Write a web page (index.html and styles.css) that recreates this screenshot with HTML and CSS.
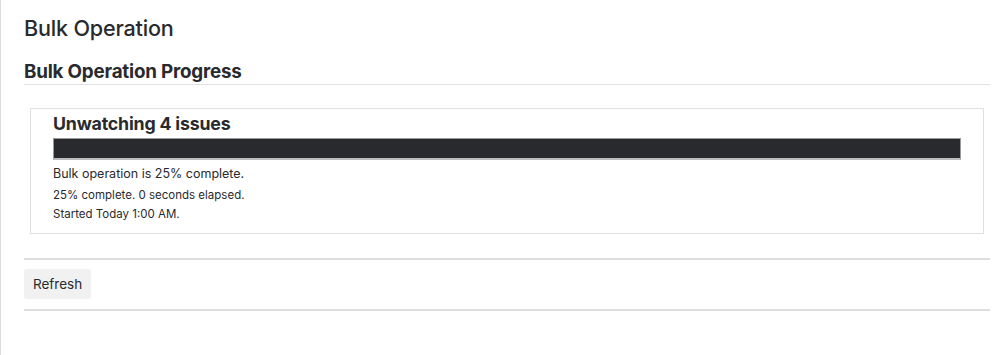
FILE: index.html
```html
<!DOCTYPE html>
<html>
<head>
<meta charset="utf-8">
<title>Bulk Operation</title>
<link rel="stylesheet" href="styles.css">
</head>
<body>
<div class="page">
  <h1 class="title">Bulk Operation</h1>
  <h2 class="section-title">Bulk Operation Progress</h2>
  <div class="progress-box">
    <h3 class="task-title">Unwatching 4 issues</h3>
    <div class="progress-bar"><div class="progress-fill"></div></div>
    <p class="status">Bulk operation is 25% complete.</p>
    <p class="detail first">25% complete. 0 seconds elapsed.</p>
    <p class="detail">Started Today 1:00 AM.</p>
  </div>
  <div class="actions">
    <button class="btn">Refresh</button>
  </div>
</div>
</body>
</html>
```

FILE: styles.css
```css
html, body {
  margin: 0;
  padding: 0;
  background: #fff;
}
body {
  font-family: Inter, "Noto Sans", "Liberation Sans", sans-serif;
  color: #292a2e;
}
.page {
  border-left: 1px solid #dcdcdc;
  min-height: 355px;
  box-sizing: border-box;
  padding: 14px 9px 0 23px;
}
.title {
  margin: 0;
  font-size: 21.6px;
  font-weight: 500;
  line-height: 28px;
  letter-spacing: -0.2px;
}
.section-title {
  margin: 19px 0 0;
  font-size: 18.8px;
  font-weight: 700;
  line-height: 22px;
  padding-bottom: 1px;
  border-bottom: 1px solid #e2e2e2;
  letter-spacing: -0.2px;
}
.progress-box {
  margin: 23px 6px 0 6px;
  border: 1px solid #e0e0e0;
  padding: 4px 22px 11px 22px;
}
.task-title {
  margin: 0;
  font-size: 17.8px;
  font-weight: 700;
  line-height: 22px;
  letter-spacing: -0.2px;
}
.progress-bar {
  margin-top: 3px;
  height: 22px;
  box-sizing: border-box;
  border: 1px solid #9a9a9a;
  border-bottom-width: 2px;
  border-bottom-color: #bdbdbd;
  background: #292a2e;
}
.progress-fill {
  height: 100%;
  width: 25%;
  background: #292a2e;
}
.status {
  margin: 6px 0 0;
  font-size: 12.5px;
  line-height: 16px;
}
.detail {
  margin: 3px 0 0;
  font-size: 11.5px;
  line-height: 16px;
}
.detail.first {
  margin-top: 5px;
}
.actions {
  margin-top: 24px;
  border-top: 2px solid #dedede;
  border-bottom: 2px solid #dedede;
  padding: 9px 0 10px;
}
.btn {
  display: block;
  font-family: inherit;
  font-size: 13.5px;
  color: #292a2e;
  background: #f1f1f1;
  border: none;
  border-radius: 3px;
  height: 30px;
  padding: 0 9px;
  cursor: pointer;
}
```
